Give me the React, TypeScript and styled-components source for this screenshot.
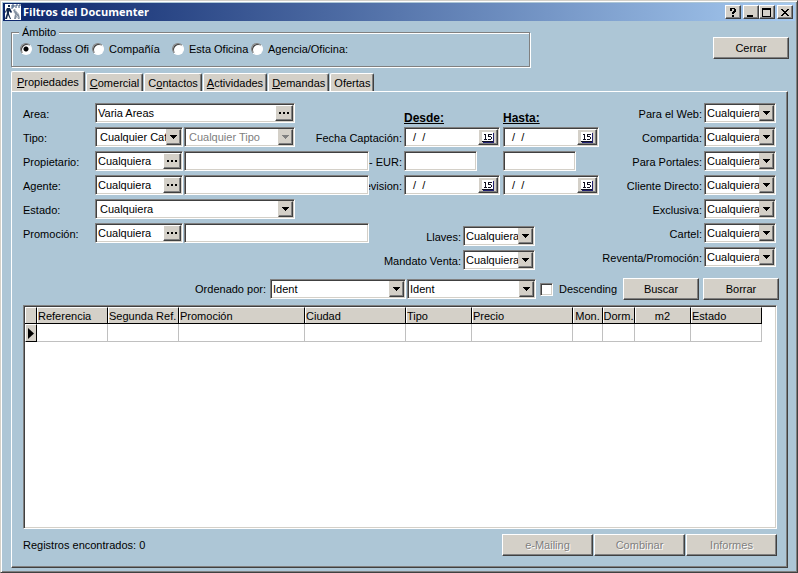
import React from "react";
import styled, { createGlobalStyle, css } from "styled-components";

const face = "#d4d0c8";
const surface = "#adc6d6";
const shade = "#808080";
const dark = "#404040";

const GlobalStyle = createGlobalStyle`
  * { box-sizing: border-box; }
  body { margin: 0; background: ${surface}; }
  body, button, input, select {
    font-family: "Liberation Sans", Arial, sans-serif;
    font-size: 11px;
    color: #000;
  }
`;

const raised = css`
  background: ${face};
  border: 1px solid;
  border-color: #fff ${dark} ${dark} #fff;
  box-shadow: inset -1px -1px ${shade};
`;

const sunken = css`
  background: #fff;
  border: 1px solid;
  border-color: ${shade} #fff #fff ${shade};
  box-shadow: inset 1px 1px ${dark}, inset -1px -1px ${face};
  padding: 1px;
`;

const Window = styled.div`
  min-height: 100vh;
  display: flex;
  flex-direction: column;
  background: ${surface};
  border: 1px solid;
  border-color: ${face} ${dark} ${dark} ${face};
  box-shadow: inset 1px 1px #fff, inset -1px -1px ${shade};
  padding: 2px;
`;

const TitleBar = styled.header`
  display: flex;
  align-items: center;
  height: 18px;
  padding: 0 2px;
  background: linear-gradient(to right, #0a246a, #a6caf0);
`;

const Title = styled.h1`
  flex: 1;
  margin: 0;
  padding-left: 2px;
  color: #fff;
  font: bold 11px/18px "Open Sans", "Noto Sans", sans-serif;
`;

const CaptionButton = styled.button<{ $gap?: boolean }>`
  ${raised}
  width: 16px;
  height: 14px;
  padding: 0;
  margin-left: ${(p) => (p.$gap ? 2 : 0)}px;
  display: grid;
  place-items: center;
`;

const TopRow = styled.div`
  display: flex;
  justify-content: space-between;
  align-items: flex-start;
  padding: 5px 6px 0 8px;
`;

const Scope = styled.fieldset`
  width: 519px;
  height: 41px;
  margin: 0;
  padding: 0 7px;
  border: 1px solid ${shade};
  box-shadow: 1px 1px #fff, inset 1px 1px #fff;
`;

const Legend = styled.legend`
  padding: 0 3px;
  line-height: 13px;
  background: ${surface};
`;

const ScopeOptions = styled.div`
  display: grid;
  grid-template-columns: 72px 80px 79px auto;
  padding: 3px 0 0 1px;
`;

const RadioLabel = styled.label`
  display: flex;
  align-items: center;
  gap: 5px;
  line-height: 14px;
  white-space: nowrap;
`;

const Radio = styled.input.attrs({ type: "radio", name: "scope" })`
  appearance: none;
  flex: none;
  width: 12px;
  height: 12px;
  margin: 0;
  border: 1px solid;
  border-color: ${shade} #fff #fff ${shade};
  border-radius: 50%;
  background: #fff;
  box-shadow: inset 1px 1px ${dark};
  &:checked {
    background: radial-gradient(circle, #000 2px, #fff 3px);
  }
`;

const Button = styled.button<{ $wide?: boolean }>`
  ${raised}
  flex: none;
  width: ${(p) => (p.$wide ? 91 : 76)}px;
  height: 22px;
  padding: 0;
  &:disabled {
    color: ${shade};
    text-shadow: 1px 1px #fff;
  }
`;

const CloseButton = styled(Button)`
  margin-top: 11px;
`;

const Tabs = styled.div`
  display: flex;
  align-items: flex-end;
  gap: 1px;
  margin-top: 4px;
  padding: 0 8px;
`;

const Tab = styled.button<{ $active?: boolean }>`
  height: ${(p) => (p.$active ? 20 : 18)}px;
  padding: 0 ${(p) => (p.$active ? 5 : 3)}px;
  background: ${face};
  border: 1px solid;
  border-color: #fff ${dark} transparent #fff;
  border-bottom: 0;
  border-radius: 2px 2px 0 0;
  box-shadow: inset -1px 0 ${shade};
`;

const Panel = styled.main`
  flex: 1;
  display: flex;
  flex-direction: column;
  margin: 0 7px 2px 8px;
  padding: 11px 8px 11px 11px;
  border: 1px solid;
  border-color: #fff ${dark} ${dark} #fff;
  box-shadow: inset -1px -1px ${shade};
`;

const Form = styled.form`
  display: grid;
  grid-template-columns: 72px 89px 111px 74px 35px 99px 97px 1fr 72px;
  grid-auto-rows: 24px;
  align-items: start;
  padding-right: 3px;
`;

type Place = { $row: number; $from: number; $to: number };

const Cell = styled.div<Place>`
  grid-row: ${(p) => p.$row};
  grid-column: ${(p) => p.$from} / ${(p) => p.$to};
  min-width: 0;
`;

const LeftLabel = styled.label<{ $row: number }>`
  grid-row: ${(p) => p.$row};
  grid-column: 1;
  line-height: 22px;
`;

const RightLabel = styled.label<Place>`
  grid-row: ${(p) => p.$row};
  grid-column: ${(p) => p.$from} / ${(p) => p.$to};
  display: flex;
  justify-content: flex-end;
  overflow: hidden;
  padding-right: 2px;
  line-height: 22px;
  white-space: nowrap;
`;

const RangeHeading = styled.span<{ $col: number }>`
  grid-row: 1;
  grid-column: ${(p) => p.$col};
  align-self: end;
  padding-bottom: 2px;
  font-size: 12px;
  line-height: 14px;
  font-weight: bold;
  text-decoration: underline;
`;

const Box = styled.div<{ $width?: number }>`
  ${sunken}
  display: grid;
  grid-template-columns: minmax(0, 1fr) auto;
  height: 20px;
  width: ${(p) => (p.$width ? `${p.$width}px` : "100%")};
`;

const TextInput = styled.input`
  width: 100%;
  min-width: 0;
  height: 16px;
  padding: 0 1px;
  border: 0;
  outline: 0;
  background: transparent;
  white-space: pre;
`;

const NativeSelect = styled.select<{ $indent: number }>`
  appearance: none;
  grid-area: 1 / 1 / 2 / 3;
  width: 100%;
  height: 16px;
  margin: 0;
  padding: 0 14px 0 ${(p) => p.$indent}px;
  border: 0;
  border-radius: 0;
  outline: 0;
  background: transparent;
  &:disabled {
    color: ${shade};
    opacity: 1;
  }
`;

const Arrow = styled.span`
  ${raised}
  border-color: ${face} ${dark} ${dark} ${face};
  grid-area: 1 / 2;
  width: 15px;
  height: 16px;
  display: grid;
  place-items: center;
  pointer-events: none;
`;

const SmallButton = styled.button`
  ${raised}
  width: 20px;
  height: 16px;
  padding: 0;
  display: grid;
  place-items: center;
`;

const MoreButton = styled(SmallButton)`
  width: 18px;
`;

const ExtraFilters = styled.div`
  grid-row: 6 / 8;
  grid-column: 4 / 8;
  display: grid;
  grid-template-columns: 168px 72px;
  grid-auto-rows: 24px;
  padding-top: 3px;
`;

const SortRow = styled.div`
  display: flex;
  justify-content: flex-end;
  align-items: center;
  gap: 4px;
  margin-top: 7px;
`;

const SortFields = styled.div`
  display: flex;
  gap: 1px;
`;

const CheckLabel = styled.label`
  display: flex;
  align-items: center;
  gap: 6px;
  width: 79px;
`;

const Checkbox = styled.input.attrs({ type: "checkbox" })`
  appearance: none;
  ${sunken}
  flex: none;
  width: 13px;
  height: 13px;
  margin: 0;
  &:checked {
    background: radial-gradient(circle, #000 3px, #fff 4px);
  }
`;

const ResultBox = styled.section`
  ${sunken}
  flex: 1;
  min-height: 120px;
  margin: 5px 2px 0 0;
`;

const Table = styled.table`
  width: 737px;
  table-layout: fixed;
  border-collapse: separate;
  border-spacing: 0;
`;

const Head = styled.th<{ $center?: boolean }>`
  height: 17px;
  padding: 0 0 0 ${(p) => (p.$center ? 0 : 1)}px;
  background: ${face};
  border: solid;
  border-width: 1px 1px 1px 0;
  border-color: #fff #000 #000;
  box-shadow: inset 1px 0 #fff;
  font-weight: normal;
  text-align: ${(p) => (p.$center ? "center" : "left")};
  white-space: nowrap;
`;

const Data = styled.td`
  height: 18px;
  padding: 0;
  border: solid #c0c0c0;
  border-width: 0 1px 1px 0;
`;

const Marker = styled.td`
  height: 18px;
  padding: 0 0 0 2px;
  background: ${face};
  border: 1px solid;
  border-color: #fff #000 #000 #fff;
  line-height: 0;
`;

const Footer = styled.footer`
  display: flex;
  align-items: center;
  justify-content: space-between;
  margin: 5px 2px 0 0;
`;

const FooterButtons = styled.div`
  display: flex;
  gap: 1px;
`;

function Logo() {
  return (
    <svg width="16" height="16" viewBox="0 0 16 16" aria-hidden="true">
      <rect width="16" height="16" fill="#fff" />
      <path d="M3 1h2v2H3zM2 4h3l2 4-1 1-2-2v3l2 5H5L3 11l-1 4H0l2-6V6L1 9 0 8z" fill="#10264c" />
      <path d="M7 5V1h2v2H7M11 4V1h2M14 4V1h2" fill="none" stroke="#345078" />
      <path d="M8 6l2-1 2 3 2 2 1 5h-2l-1-3-1 3H9l1-5z" fill="#8390a0" />
      <path d="M8 8l7 7M10 6l5 6" stroke="#e0e5eb" strokeDasharray="1 1" />
    </svg>
  );
}

function Down({ muted }: { muted?: boolean }) {
  return (
    <svg width="7" height="4" viewBox="0 0 7 4" shapeRendering="crispEdges" aria-hidden="true">
      <path d="M0 0h7v1H6v1H5v1H4v1H3V3H2V2H1V1H0z" fill={muted ? shade : "#000"} />
    </svg>
  );
}

function Dots() {
  return (
    <svg width="10" height="2" shapeRendering="crispEdges" aria-hidden="true">
      <path d="M0 0h2v2H0zM4 0h2v2H4zM8 0h2v2H8z" />
    </svg>
  );
}

function Calendar() {
  return (
    <svg width="12" height="11" viewBox="0 0 12 11" shapeRendering="crispEdges" aria-hidden="true">
      <path d="M1 1h11v10H1z" fill="#202070" />
      <path d="M0 0h11v10H0z" fill="#fff" />
      <path d="M2 2h2v5h1v1H2V7h1V3H2zM6 2h4v1H7v1h2v1h1v2H9v1H6V7h3V5H6z" fill="#101020" />
      <path d="M0 9h11v1H0z" fill="#101020" />
    </svg>
  );
}

type SelectProps = {
  id: string;
  value?: string;
  width?: number;
  indent?: number;
  disabled?: boolean;
  label?: string;
};

function Select({ id, value = "Cualquiera", width, indent = 1, disabled, label }: SelectProps) {
  return (
    <Box $width={width}>
      <NativeSelect id={id} $indent={indent} disabled={disabled} aria-label={label}>
        <option>{value}</option>
      </NativeSelect>
      <Arrow>
        <Down muted={disabled} />
      </Arrow>
    </Box>
  );
}

function Lookup({ id, value, width }: { id: string; value: string; width: number }) {
  return (
    <Box $width={width}>
      <TextInput id={id} defaultValue={value} />
      <MoreButton type="button" aria-label="Elegir">
        <Dots />
      </MoreButton>
    </Box>
  );
}

function DateField({ id, label }: { id: string; label: string }) {
  return (
    <Box $width={96}>
      <TextInput id={id} aria-label={label} defaultValue={"  /  /"} />
      <SmallButton type="button" aria-label="Calendario">
        <Calendar />
      </SmallButton>
    </Box>
  );
}

const tabs = [
  ["", "P", "ropiedades"],
  ["", "C", "omercial"],
  ["C", "o", "ntactos"],
  ["", "A", "ctividades"],
  ["", "D", "emandas"],
  ["Ofertas", "", ""],
];

const people = [
  { id: "propietario", label: "Propietario:", row: 3 },
  { id: "agente", label: "Agente:", row: 4 },
  { id: "promocion", label: "Promoción:", row: 6 },
];

const flags = [
  "Para el Web:",
  "Compartida:",
  "Para Portales:",
  "Cliente Directo:",
  "Exclusiva:",
  "Cartel:",
  "Reventa/Promoción:",
];

const columns: { name: string; width: number; center?: boolean }[] = [
  { name: "Referencia", width: 71 },
  { name: "Segunda Ref.", width: 71 },
  { name: "Promoción", width: 126 },
  { name: "Ciudad", width: 101 },
  { name: "Tipo", width: 66 },
  { name: "Precio", width: 101 },
  { name: "Mon.", width: 30, center: true },
  { name: "Dorm.", width: 32, center: true },
  { name: "m2", width: 56, center: true },
  { name: "Estado", width: 71 },
];

export default function App() {
  return (
    <Window>
      <GlobalStyle />
      <TitleBar>
        <Logo />
        <Title>Filtros del Documenter</Title>
        <CaptionButton aria-label="Ayuda">
          <svg width="8" height="9" shapeRendering="crispEdges">
            <path d="M1 0h5v1h1v3H6v1H5v1H3V4h1V3h1V1H3v2H1zM3 7h2v2H3z" />
          </svg>
        </CaptionButton>
        <CaptionButton $gap aria-label="Minimizar">
          <svg width="10" height="9" shapeRendering="crispEdges">
            <path d="M1 7h6v2H1z" />
          </svg>
        </CaptionButton>
        <CaptionButton aria-label="Maximizar">
          <svg width="10" height="9" shapeRendering="crispEdges">
            <path d="M0 0h9v9H0zM1 2v6h7V2z" fillRule="evenodd" />
          </svg>
        </CaptionButton>
        <CaptionButton $gap aria-label="Cerrar ventana">
          <svg width="8" height="7" shapeRendering="crispEdges">
            <path d="M0 0h2v1h1v1h2V1h1V0h2v1H7v1H6v1H5v1h1v1h1v1h1v1H6V6H5V5H3v1H2v1H0V6h1V5h1V4h1V3H2V2H1V1H0z" />
          </svg>
        </CaptionButton>
      </TitleBar>

      <TopRow>
        <Scope>
          <Legend>Ámbito</Legend>
          <ScopeOptions>
            <RadioLabel>
              <Radio defaultChecked />
              Todass Ofi
            </RadioLabel>
            <RadioLabel>
              <Radio />
              Compañía
            </RadioLabel>
            <RadioLabel>
              <Radio />
              Esta Oficina
            </RadioLabel>
            <RadioLabel>
              <Radio />
              Agencia/Oficina:
            </RadioLabel>
          </ScopeOptions>
        </Scope>
        <CloseButton>Cerrar</CloseButton>
      </TopRow>

      <Tabs role="tablist">
        {tabs.map(([before, key, after], i) => (
          <Tab key={i} role="tab" aria-selected={i === 0} $active={i === 0}>
            {before}
            {key && <u>{key}</u>}
            {after}
          </Tab>
        ))}
      </Tabs>

      <Panel>
        <Form>
          <LeftLabel $row={1} htmlFor="area">Area:</LeftLabel>
          <Cell $row={1} $from={2} $to={4}>
            <Lookup id="area" value="Varia Areas" width={200} />
          </Cell>

          <LeftLabel $row={2} htmlFor="categoria">Tipo:</LeftLabel>
          <Cell $row={2} $from={2} $to={3}>
            <Select id="categoria" value="Cualquier Categoria" width={88} indent={3} />
          </Cell>
          <Cell $row={2} $from={3} $to={4}>
            <Select id="tipo" value="Cualquier Tipo" label="Tipo" indent={3} disabled />
          </Cell>

          {people.map(({ id, label, row }) => (
            <React.Fragment key={id}>
              <LeftLabel $row={row} htmlFor={id}>{label}</LeftLabel>
              <Cell $row={row} $from={2} $to={3}>
                <Lookup id={id} value="Cualquiera" width={88} />
              </Cell>
              <Cell $row={row} $from={3} $to={5}>
                <Box>
                  <TextInput aria-label={label} />
                </Box>
              </Cell>
            </React.Fragment>
          ))}

          <LeftLabel $row={5} htmlFor="estado">Estado:</LeftLabel>
          <Cell $row={5} $from={2} $to={4}>
            <Select id="estado" indent={3} />
          </Cell>

          <RangeHeading $col={6}>Desde:</RangeHeading>
          <RangeHeading $col={7}>Hasta:</RangeHeading>

          <RightLabel $row={2} $from={4} $to={6} htmlFor="captacion-desde">Fecha Captación:</RightLabel>
          <Cell $row={2} $from={6} $to={7}>
            <DateField id="captacion-desde" label="Fecha Captación desde" />
          </Cell>
          <Cell $row={2} $from={7} $to={8}>
            <DateField id="captacion-hasta" label="Fecha Captación hasta" />
          </Cell>

          <RightLabel $row={3} $from={5} $to={6} htmlFor="eur-desde">- EUR:</RightLabel>
          <Cell $row={3} $from={6} $to={7}>
            <Box $width={73}>
              <TextInput id="eur-desde" />
            </Box>
          </Cell>
          <Cell $row={3} $from={7} $to={8}>
            <Box $width={73}>
              <TextInput id="eur-hasta" aria-label="EUR hasta" />
            </Box>
          </Cell>

          <RightLabel $row={4} $from={5} $to={6} htmlFor="revision-desde">evision:</RightLabel>
          <Cell $row={4} $from={6} $to={7}>
            <DateField id="revision-desde" label="Revision desde" />
          </Cell>
          <Cell $row={4} $from={7} $to={8}>
            <DateField id="revision-hasta" label="Revision hasta" />
          </Cell>

          <ExtraFilters>
            <RightLabel $row={1} $from={1} $to={2} htmlFor="llaves">Llaves:</RightLabel>
            <Select id="llaves" />
            <RightLabel $row={2} $from={1} $to={2} htmlFor="mandato">Mandato Venta:</RightLabel>
            <Select id="mandato" />
          </ExtraFilters>

          {flags.map((label, i) => (
            <React.Fragment key={label}>
              <RightLabel $row={i + 1} $from={8} $to={9} htmlFor={`flag-${i}`}>{label}</RightLabel>
              <Cell $row={i + 1} $from={9} $to={10}>
                <Select id={`flag-${i}`} />
              </Cell>
            </React.Fragment>
          ))}
        </Form>

        <SortRow>
          <label htmlFor="orden-1">Ordenado por:</label>
          <SortFields>
            <Select id="orden-1" value="Ident" width={136} />
            <Select id="orden-2" value="Ident" width={129} label="Segundo orden" />
          </SortFields>
          <CheckLabel>
            <Checkbox />
            Descending
          </CheckLabel>
          <Button>Buscar</Button>
          <Button>Borrar</Button>
        </SortRow>

        <ResultBox>
          <Table>
            <colgroup>
              <col width={12} />
              {columns.map((c) => (
                <col key={c.name} width={c.width} />
              ))}
            </colgroup>
            <thead>
              <tr>
                <Head aria-label="Fila actual" />
                {columns.map((c) => (
                  <Head key={c.name} $center={c.center}>{c.name}</Head>
                ))}
              </tr>
            </thead>
            <tbody>
              <tr>
                <Marker>
                  <svg width="6" height="11" aria-hidden="true">
                    <path d="M0 0l6 5.500L0 11z" />
                  </svg>
                </Marker>
                {columns.map((c) => (
                  <Data key={c.name} />
                ))}
              </tr>
            </tbody>
          </Table>
        </ResultBox>

        <Footer>
          <span>Registros encontrados: 0</span>
          <FooterButtons>
            <Button $wide disabled>e-Mailing</Button>
            <Button $wide disabled>Combinar</Button>
            <Button $wide disabled>Informes</Button>
          </FooterButtons>
        </Footer>
      </Panel>
    </Window>
  );
}
